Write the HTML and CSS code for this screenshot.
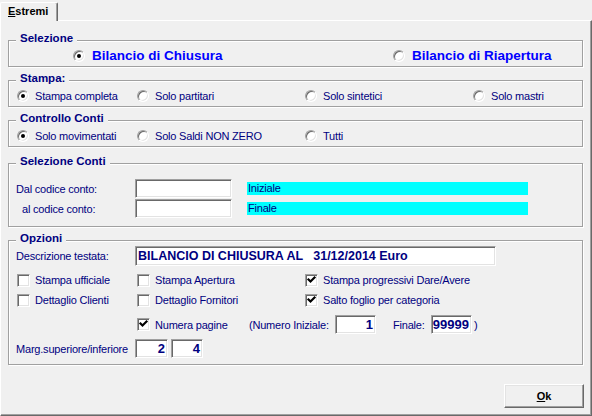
FILE: index.html
```html
<!DOCTYPE html>
<html lang="it">
<head>
<meta charset="utf-8">
<title>Estremi</title>
<link rel="stylesheet" href="styles.css">
</head>
<body>
<div class="window">
  <div class="tabs">
    <div class="tab"><span class="acc">E</span>stremi</div>
  </div>
  <div class="panel">
    <fieldset class="group g-sel">
      <legend>Selezione</legend>
      <div class="sel-row">
        <span class="opt"><span class="radio on"></span>Bilancio di Chiusura</span>
        <span class="opt"><span class="radio"></span>Bilancio di Riapertura</span>
      </div>
    </fieldset>

    <fieldset class="group g-gap5">
      <legend>Stampa:</legend>
      <div class="grid4">
        <span class="opt"><span class="radio on"></span>Stampa completa</span>
        <span class="opt"><span class="radio"></span>Solo partitari</span>
        <span class="opt"><span class="radio"></span>Solo sintetici</span>
        <span class="opt"><span class="radio"></span>Solo mastri</span>
      </div>
    </fieldset>

    <fieldset class="group g-gap5">
      <legend>Controllo Conti</legend>
      <div class="grid4">
        <span class="opt"><span class="radio on"></span>Solo movimentati</span>
        <span class="opt"><span class="radio"></span>Solo Saldi NON ZERO</span>
        <span class="opt"><span class="radio"></span>Tutti</span>
      </div>
    </fieldset>

    <fieldset class="group g-conti">
      <legend>Selezione Conti</legend>
      <div class="frow">
        <span class="lbl">Dal codice conto:</span>
        <span class="box w-code"></span>
        <span class="cyan">Iniziale</span>
      </div>
      <div class="frow">
        <span class="lbl indent">al codice conto:</span>
        <span class="box w-code"></span>
        <span class="cyan">Finale</span>
      </div>
    </fieldset>

    <fieldset class="group g-opz">
      <legend>Opzioni</legend>
      <div class="frow descr">
        <span class="lbl">Descrizione testata:</span>
        <span class="box w-descr text">BILANCIO DI CHIUSURA AL   31/12/2014 Euro</span>
      </div>
      <div class="grid4 chk-row first">
        <span class="opt chk"><span class="checkbox"></span>Stampa ufficiale</span>
        <span class="opt chk"><span class="checkbox"></span>Stampa Apertura</span>
        <span class="opt chk"><span class="checkbox on"><svg viewBox="0 0 13 13" width="13" height="13"><polyline points="3.5,5.5 5.5,7.5 9.5,3.5" /></svg></span>Stampa progressivi Dare/Avere</span>
      </div>
      <div class="grid4 chk-row">
        <span class="opt chk"><span class="checkbox"></span>Dettaglio Clienti</span>
        <span class="opt chk"><span class="checkbox"></span>Dettaglio Fornitori</span>
        <span class="opt chk"><span class="checkbox on"><svg viewBox="0 0 13 13" width="13" height="13"><polyline points="3.5,5.5 5.5,7.5 9.5,3.5" /></svg></span>Salto foglio per categoria</span>
      </div>
      <div class="frow numrow">
        <span class="opt chk w-numera"><span class="checkbox on"><svg viewBox="0 0 13 13" width="13" height="13"><polyline points="3.5,5.5 5.5,7.5 9.5,3.5" /></svg></span>Numera pagine</span>
        <span class="w-ini">(Numero Iniziale:</span>
        <span class="box w-num num">1</span>
        <span class="w-fin">Finale:</span>
        <span class="box w-num num">99999</span>
        <span class="close">)</span>
      </div>
      <div class="frow margrow">
        <span class="lbl">Marg.superiore/inferiore</span>
        <span class="box w-m1 num">2</span>
        <span class="box w-m2 num">4</span>
      </div>
    </fieldset>

    <button class="okbtn" type="button"><span class="acc">O</span>k</button>
  </div>
</div>
</body>
</html>
```

FILE: styles.css
```css
html, body {
  margin: 0;
  padding: 0;
}

body {
  background: #f0f0f0;
  font-family: "Liberation Sans", Arial, sans-serif;
  font-size: 11px;
  letter-spacing: -0.2px;
  color: #000080;
}

.window {
  width: 592px;
  height: 416px;
  display: flex;
  flex-direction: column;
  overflow: hidden;
}

/* ---- tab strip ---- */
.tabs {
  height: 20px;
  display: flex;
  align-items: flex-end;
  position: relative;
  z-index: 1;
  flex: none;
}

.tab {
  box-sizing: border-box;
  width: 58px;
  height: 19px;
  margin-bottom: -1px;
  padding: 2px 0 0 7px;
  border-top: 1px solid #fff;
  border-left: 1px solid #fff;
  border-right: 1px solid #696969;
  border-radius: 2px 2px 0 0;
  box-shadow: inset -1px 0 0 #a0a0a0;
  background: #f0f0f0;
  color: #000;
  font-weight: bold;
  line-height: 13px;
  letter-spacing: 0;
}

.acc {
  text-decoration: underline;
  text-underline-offset: 1px;
}

/* ---- panel ---- */
.panel {
  flex: 1;
  box-sizing: border-box;
  border: 1px solid;
  border-color: #fff #696969 #696969 #fff;
  box-shadow: inset -1px -1px 0 #a0a0a0;
  padding: 11px 8px 7px 7px;
  display: flex;
  flex-direction: column;
}

/* ---- group boxes ---- */
.group {
  margin: 0;
  min-width: 0;
  padding: 0 7px 3px 7px;
  border: 1px solid #a0a0a0;
  box-shadow: inset 1px 1px 0 #fff, 1px 1px 0 #fff;
}

.group legend {
  padding: 0 4px 3px 4px;
  line-height: 13px;
  font-size: 11.5px;
  font-weight: bold;
  letter-spacing: 0;
  color: #000080;
  background: #f0f0f0;
}

.g-gap5 { margin-top: 5px; }

.g-conti {
  margin-top: 8px;
  padding-top: 8px;
  padding-bottom: 8px;
}

.g-opz {
  margin-top: 5px;
  padding-bottom: 6px;
}

/* ---- option items ---- */
.opt {
  display: flex;
  align-items: center;
  gap: 6px;
  white-space: nowrap;
}

.opt.chk { gap: 5px; }

.sel-row {
  display: grid;
  grid-template-columns: 320px auto;
  padding-left: 57px;
  height: 15px;
  align-items: center;
  font-size: 13.5px;
  font-weight: bold;
  letter-spacing: 0;
  color: #0000ff;
}

.sel-row .opt { gap: 7px; }

.grid4 {
  display: grid;
  grid-template-columns: 120px 168px 168px auto;
  padding-left: 1px;
  height: 15px;
  align-items: center;
}

.radio {
  position: relative;
  flex: none;
  box-sizing: border-box;
  width: 12px;
  height: 12px;
  border-radius: 50%;
  border: 1px solid;
  border-color: #a0a0a0 #fff #fff #a0a0a0;
  box-shadow: inset 1px 1px 0 #696969, inset -1px -1px 0 #e3e3e3;
  background: #fff;
}

.radio.on::after {
  content: "";
  position: absolute;
  left: 3px;
  top: 3px;
  width: 4px;
  height: 4px;
  border-radius: 50%;
  background: #000;
}

.checkbox {
  position: relative;
  flex: none;
  box-sizing: border-box;
  width: 13px;
  height: 13px;
  border: 1px solid;
  border-color: #a0a0a0 #fff #fff #a0a0a0;
  box-shadow: inset 1px 1px 0 #696969, inset -1px -1px 0 #e3e3e3;
  background: #fff;
}

.checkbox svg {
  position: absolute;
  left: -1px;
  top: -1px;
}

.checkbox polyline {
  fill: none;
  stroke: #000;
  stroke-width: 2.2;
  stroke-linecap: square;
}

/* ---- field rows ---- */
.frow {
  display: flex;
  align-items: center;
  height: 19px;
  white-space: nowrap;
}

.g-conti .frow + .frow { margin-top: 1px; }

.lbl {
  width: 119px;
  flex: none;
}

.lbl.indent { padding-left: 6px; box-sizing: border-box; }

.box {
  box-sizing: border-box;
  height: 19px;
  flex: none;
  border: 1px solid;
  border-color: #a0a0a0 #fff #fff #a0a0a0;
  box-shadow: inset 1px 1px 0 #696969, inset -1px -1px 0 #e3e3e3;
  background: #fff;
  line-height: 17px;
  font-weight: bold;
  color: #000080;
  letter-spacing: 0;
}

.w-code { width: 97px; }

.cyan {
  margin-left: 15px;
  width: 281px;
  height: 13px;
  line-height: 13px;
  padding-left: 1px;
  box-sizing: border-box;
  background: #00ffff;
  color: #000080;
}

.g-opz .descr {
  margin-top: -2px;
  height: 20px;
}

.w-descr {
  width: 361px;
  height: 20px;
  line-height: 18px;
}

.text {
  white-space: pre;
  padding-left: 2px;
  font-size: 12.5px;
}

.g-opz .chk-row { height: 20px; margin-top: 0; }
.g-opz .chk-row.first { margin-top: 4px; }

.g-opz .numrow {
  margin-top: 5px;
  padding-left: 121px;
}

.w-numera { width: 112px; flex: none; }
.w-ini { width: 86px; flex: none; }
.w-num { width: 41px; }
.w-fin { width: 38px; margin-left: 17px; flex: none; }
.close { margin-left: 2px; }

.num {
  text-align: right;
  padding-right: 2px;
  font-size: 13px;
}

.g-opz .margrow { margin-top: 5px; }
.w-m1 { width: 33px; }
.w-m2 { width: 32px; margin-left: 3px; }

/* ---- button ---- */
.okbtn {
  align-self: flex-end;
  margin: auto -1px 0 0;
  width: 80px;
  height: 24px;
  box-sizing: border-box;
  padding: 0;
  border: 1px solid;
  border-color: #fff #696969 #696969 #fff;
  box-shadow: inset -1px -1px 0 #a0a0a0, inset 1px 1px 0 #e3e3e3;
  background: #f0f0f0;
  font-family: "Liberation Sans", Arial, sans-serif;
  font-size: 11px;
  font-weight: bold;
  color: #000;
}
```
